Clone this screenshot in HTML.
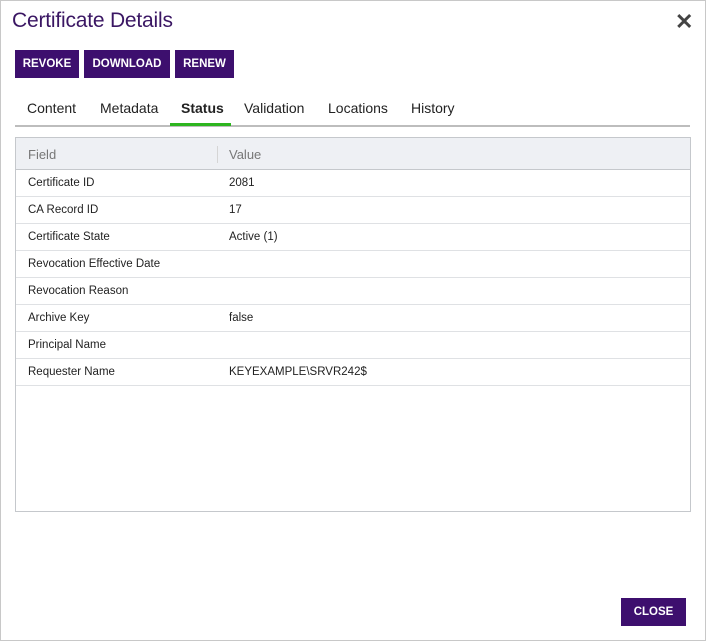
<!DOCTYPE html>
<html><head><style>
*{margin:0;padding:0;box-sizing:border-box}
body{width:706px;height:641px;background:#fff;font-family:"Liberation Sans",sans-serif;position:relative;overflow:hidden}
.frame{position:absolute;left:0;top:0;width:706px;height:641px;border:1px solid #c8c8c8}
h1{position:absolute;left:12px;top:9px;font-size:21px;font-weight:normal;color:#3a1663;letter-spacing:-0.2px}
.x{position:absolute;left:675px;top:9px;font-size:22px;font-weight:bold;color:#444}
.btn{position:absolute;top:50px;height:28px;background:#3d0f6e;color:#fff;font-size:11.5px;font-weight:bold;line-height:28px;text-align:center}
.tab{position:absolute;top:100px;font-size:14px;color:#222}
.tabline{position:absolute;left:15px;top:125px;width:675px;height:2px;background:#bdbdbd}
.active{position:absolute;left:170px;top:123px;width:61px;height:3px;background:#2db51f}
.tbl{position:absolute;left:15px;top:137px;width:676px;height:375px;border:1px solid #c5c8cc}
.hd{height:32px;background:#eef0f4;border-bottom:1px solid #c5c8cc;position:relative;font-size:13px;color:#777}
.hd span{position:absolute;top:9px}
.sep{position:absolute;left:201px;top:8px;width:1px;height:17px;background:#d5d5d5}
.row{height:27px;border-bottom:1px solid #dfe1e4;position:relative;font-size:11.5px;color:#222}
.row span{position:absolute;top:7px}
.close{position:absolute;left:621px;top:598px;width:65px;height:28px;background:#3d0f6e;color:#fff;font-size:11.5px;font-weight:bold;line-height:28px;text-align:center}
</style></head><body>
<div class="frame"></div>
<h1>Certificate Details</h1>
<div class="x">✕</div>
<div class="btn" style="left:15px;width:64px">REVOKE</div>
<div class="btn" style="left:84px;width:86px">DOWNLOAD</div>
<div class="btn" style="left:175px;width:59px">RENEW</div>
<div class="tab" style="left:27px">Content</div>
<div class="tab" style="left:100px">Metadata</div>
<div class="tab" style="left:181px;font-weight:bold">Status</div>
<div class="tab" style="left:244px">Validation</div>
<div class="tab" style="left:328px">Locations</div>
<div class="tab" style="left:411px">History</div>
<div class="tabline"></div><div class="active"></div>
<div class="tbl">
<div class="hd"><span style="left:12px">Field</span><div class="sep"></div><span style="left:213px">Value</span></div>
<div class="row"><span style="left:12px">Certificate ID</span><span style="left:213px">2081</span></div>
<div class="row"><span style="left:12px">CA Record ID</span><span style="left:213px">17</span></div>
<div class="row"><span style="left:12px">Certificate State</span><span style="left:213px">Active (1)</span></div>
<div class="row"><span style="left:12px">Revocation Effective Date</span></div>
<div class="row"><span style="left:12px">Revocation Reason</span></div>
<div class="row"><span style="left:12px">Archive Key</span><span style="left:213px">false</span></div>
<div class="row"><span style="left:12px">Principal Name</span></div>
<div class="row"><span style="left:12px">Requester Name</span><span style="left:213px">KEYEXAMPLE\SRVR242$</span></div>
</div>
<div class="close">CLOSE</div>
</body></html>
